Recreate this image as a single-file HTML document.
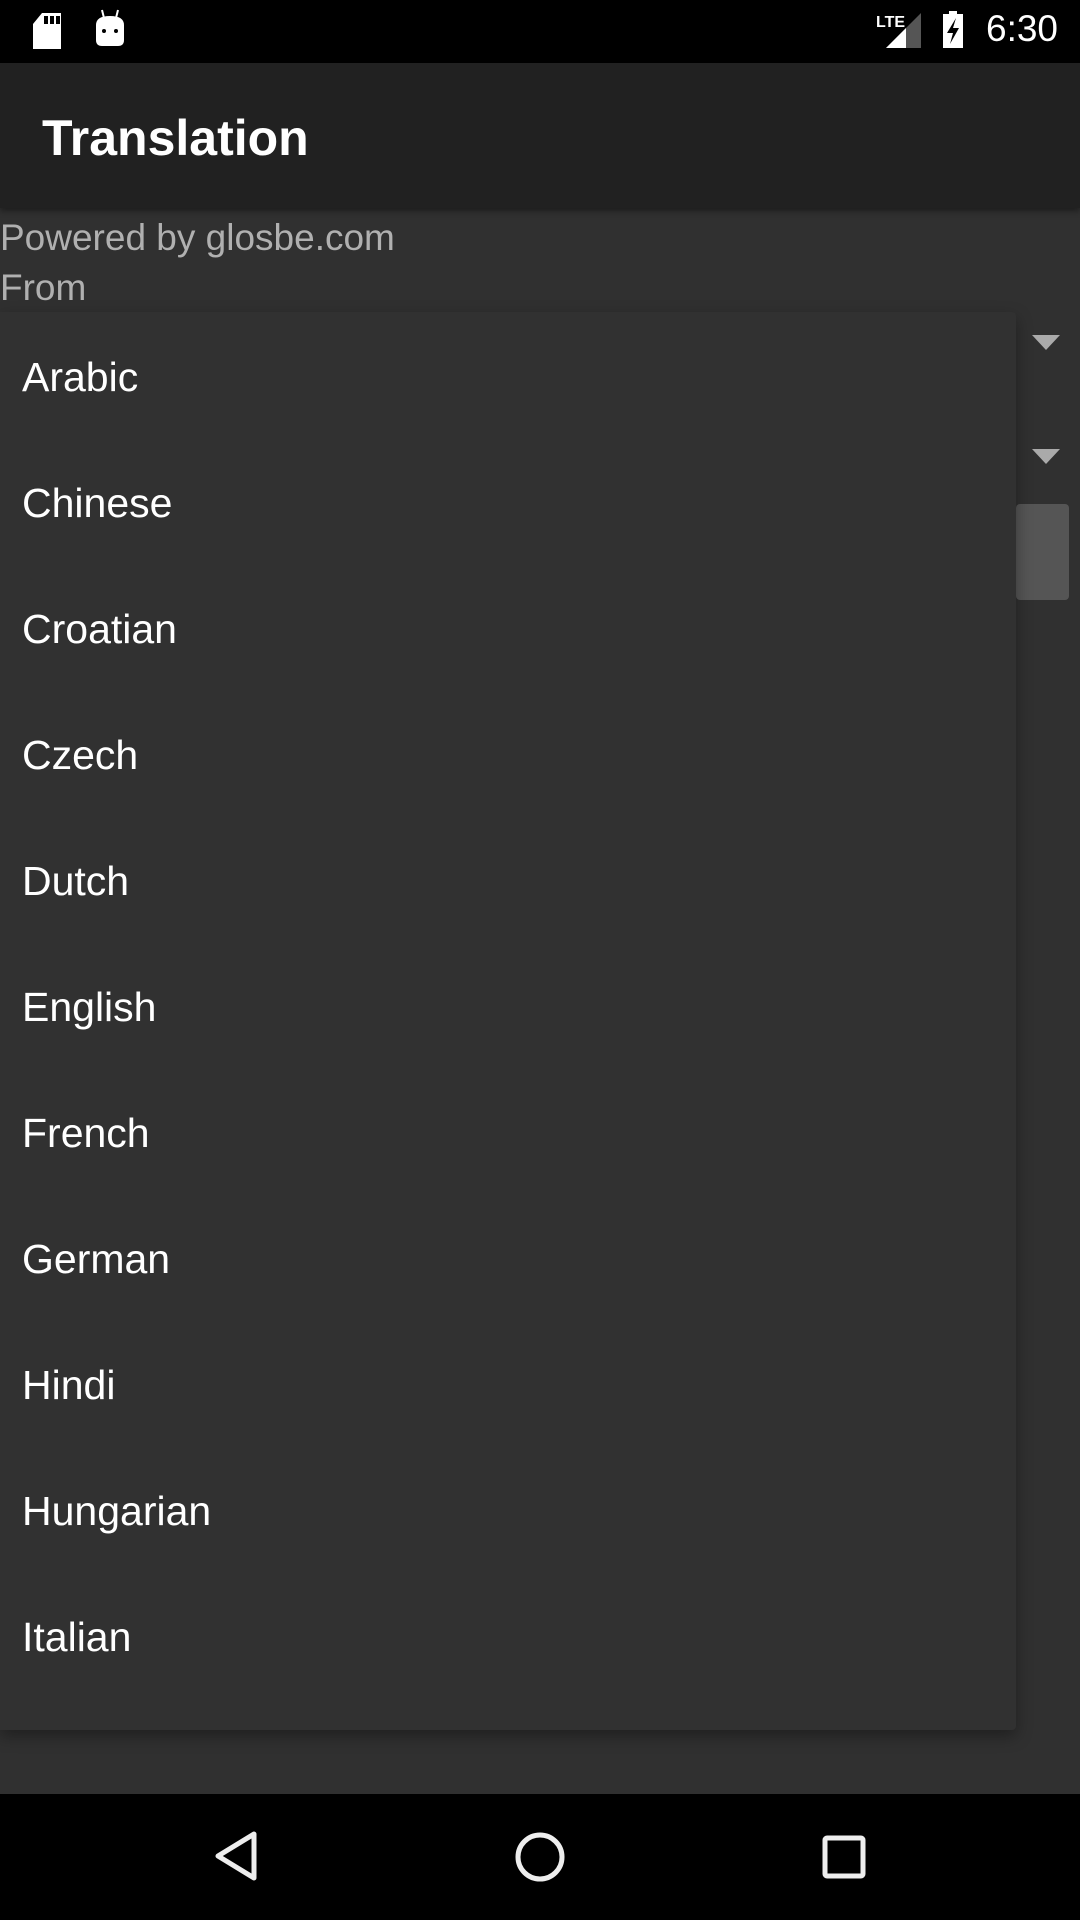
<!DOCTYPE html>
<html><head><meta charset="utf-8"><style>
*{margin:0;padding:0;box-sizing:border-box}
body{width:1080px;height:1920px;background:#303030;position:relative;overflow:hidden;font-family:"Liberation Sans",sans-serif;color:#fff}
.abs{position:absolute}
</style></head><body>
<div class="abs" style="left:0;top:0;width:1080px;height:63px;background:#000"></div>
<svg class="abs" style="left:0;top:0" width="160" height="63">
<path d="M42 13 H61 V49 H33 V24 Z" fill="#fff"/>
<rect x="44" y="16" width="4" height="8" fill="#000"/><rect x="50" y="16" width="4" height="8" fill="#000"/><rect x="56" y="16" width="4" height="8" fill="#000"/>
<path d="M102 10 L104 18 M118 10 L116 18" stroke="#fff" stroke-width="2"/>
<path d="M96 25 Q96 16 110 16 Q124 16 124 25 V40 Q124 46 118 46 H102 Q96 46 96 40 Z" fill="#fff"/>
<circle cx="104" cy="31" r="2" fill="#000"/><circle cx="116" cy="31" r="2" fill="#000"/>
</svg>
<svg class="abs" style="left:860px;top:0" width="220" height="63">
<text x="16" y="27" font-size="16" font-weight="bold" fill="#fff">LTE</text>
<polygon points="26,48 61,13 61,48" fill="#555"/>
<polygon points="26,48 46,28 46,48" fill="#fff"/>
<rect x="83" y="14" width="20" height="34" fill="#fff"/><rect x="89" y="11" width="8" height="4" fill="#fff"/>
<path d="M96 18 L87 33 H93 L90 44 L99 28 H93 Z" fill="#000"/>
<text x="126" y="41" font-size="37" fill="#fff">6:30</text>
</svg>
<div class="abs" style="left:0;top:63px;width:1080px;height:145px;background:#212121;box-shadow:0 3px 6px rgba(0,0,0,.4)"></div>
<div class="abs" style="left:42px;top:106px;font-size:50px;font-weight:bold;line-height:64px">Translation</div>
<div class="abs" style="left:0;top:214px;font-size:37px;color:#b0b0b0;line-height:48px">Powered by glosbe.com</div>
<div class="abs" style="left:0;top:264px;font-size:37px;color:#b0b0b0;line-height:48px">From</div>
<svg class="abs" style="left:1032px;top:335px" width="30" height="130"><polygon points="0,0 28,0 14,15" fill="#aaa"/><polygon points="0,114 28,114 14,129" fill="#aaa"/></svg>
<div class="abs" style="left:1016px;top:504px;width:53px;height:96px;background:#555;border-radius:4px"></div>
<div class="abs" style="left:0;top:312px;width:1016px;height:1418px;background:#313131;border-radius:0 4px 4px 0;box-shadow:0 6px 16px rgba(0,0,0,.35)">
<div style="padding-top:2px;font-size:41px;line-height:126px;padding-left:22px">
<div>Arabic</div><div>Chinese</div><div>Croatian</div><div>Czech</div><div>Dutch</div><div>English</div><div>French</div><div>German</div><div>Hindi</div><div>Hungarian</div><div>Italian</div>
</div></div>
<div class="abs" style="left:0;top:1794px;width:1080px;height:126px;background:#000"></div>
<svg class="abs" style="left:0;top:1794px" width="1080" height="126">
<polygon points="254,40 254,84 218,62" fill="none" stroke="#eee" stroke-width="5" stroke-linejoin="round"/>
<circle cx="540" cy="63" r="22" fill="none" stroke="#eee" stroke-width="5"/>
<rect x="825" y="44" width="38" height="38" rx="2" fill="none" stroke="#eee" stroke-width="5"/>
</svg>
</body></html>
